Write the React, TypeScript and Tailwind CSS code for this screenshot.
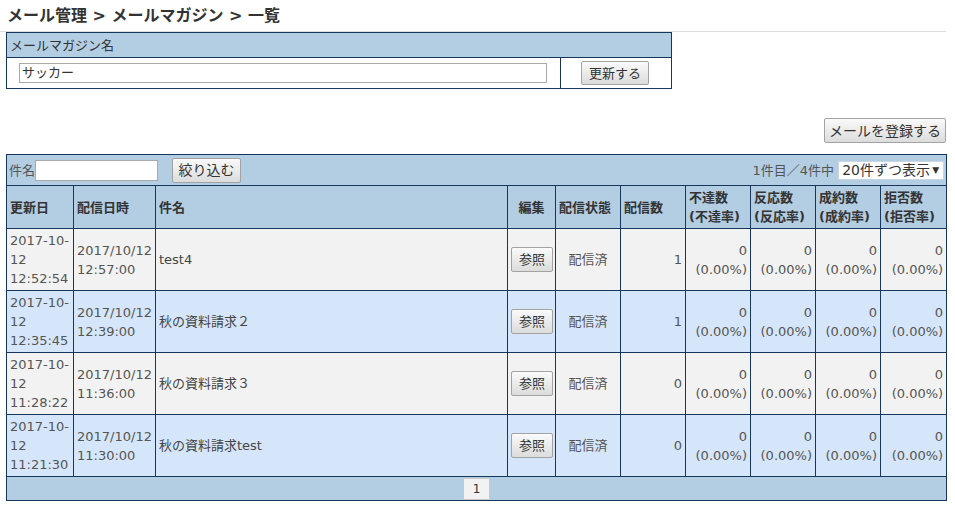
import React from 'react';

type Row = {
    updated: string;
    sent: string;
    subject: string;
    count: number;
    tone: 'gray' | 'blue';
};

const rows: Row[] = [
    { updated: '2017-10-12 12:52:54', sent: '2017/10/12 12:57:00', subject: 'test4', count: 1, tone: 'gray' },
    { updated: '2017-10-12 12:35:45', sent: '2017/10/12 12:39:00', subject: '秋の資料請求２', count: 1, tone: 'blue' },
    { updated: '2017-10-12 11:28:22', sent: '2017/10/12 11:36:00', subject: '秋の資料請求３', count: 0, tone: 'gray' },
    { updated: '2017-10-12 11:21:30', sent: '2017/10/12 11:30:00', subject: '秋の資料請求test', count: 0, tone: 'blue' },
];

const font = 'font-["DejaVu_Sans","Noto_Sans_CJK_JP",sans-serif]';
const btn =
    'bg-gradient-to-b from-[#fafafa] to-[#dcdcdc] border border-[#a3a3a3] rounded-[2px] text-[13px] text-[#333] leading-none';
const cell = 'border border-[#17365d] px-[3px] py-[2px]';

const Stat: React.FC<{ tone: string }> = ({ tone }) => (
    <td className={`${cell} ${tone} text-right align-middle`}>
        0
        <br />
        (0.00%)
    </td>
);

const App: React.FC = () => {
    return (
        <div className={`${font} w-[955px] h-[509px] bg-white text-[13px] leading-[19px] text-[#555]`}>
            {/* Title */}
            <div className="w-[946px] border-b border-[#dddddd] pl-[7px] pt-[5px] h-[32px]">
                <h1 className="text-[16px] leading-[22px] font-bold text-[#333]">
                    メール管理 &gt; メールマガジン &gt; 一覧
                </h1>
            </div>

            {/* Magazine name box */}
            <table className="ml-[6px] w-[665px] border-collapse table-fixed">
                <colgroup>
                    <col className="w-[554px]" />
                    <col className="w-[111px]" />
                </colgroup>
                <tbody>
                    <tr className="h-[25px] bg-[#b3cde3]">
                        <td colSpan={2} className="border border-[#17365d] px-[3px] text-[#333]">
                            メールマガジン名
                        </td>
                    </tr>
                    <tr className="h-[31px] bg-white">
                        <td className="border border-[#17365d] pl-[12px] pr-[13px]">
                            <div className="h-[20px] border border-[#a9a9a9] px-[2px] text-[13px] leading-[18px] text-[#333]">
                                サッカー
                            </div>
                        </td>
                        <td className="border border-[#17365d] pl-[20px]">
                            <button className={`${btn} w-[68px] h-[24px]`}>更新する</button>
                        </td>
                    </tr>
                </tbody>
            </table>

            {/* Register */}
            <div className="w-[946px] flex justify-end pt-[29px] pb-[11px]">
                <button className={`${btn} w-[122px] h-[25px] text-[14px]`}>メールを登録する</button>
            </div>

            {/* List */}
            <table className="ml-[6px] w-[940px] border-collapse table-fixed">
                <colgroup>
                    <col className="w-[67px]" />
                    <col className="w-[82px]" />
                    <col className="w-[352px]" />
                    <col className="w-[48px]" />
                    <col className="w-[65px]" />
                    <col className="w-[65px]" />
                    <col className="w-[65px]" />
                    <col className="w-[65px]" />
                    <col className="w-[65px]" />
                    <col className="w-[66px]" />
                </colgroup>
                <thead>
                    <tr className="h-[31px] bg-[#b3cde3]">
                        <td colSpan={10} className="border border-[#17365d] px-[2px]">
                            <div className="flex items-center justify-between">
                                <div className="flex items-center">
                                    <span>件名</span>
                                    <div className="w-[123px] h-[21px] bg-white border border-[#a9a9a9]" />
                                    <button className={`${btn} ml-[14px] w-[69px] h-[25px] text-[14px]`}>絞り込む</button>
                                </div>
                                <div className="flex items-center">
                                    <span className="mr-[4px]">1件目／4件中</span>
                                    <div className="w-[106px] h-[19px] bg-white border border-[#c8d6e2] flex items-center justify-between pl-[3px] pr-[4px] text-[14px] text-[#333]">
                                        <span>20件ずつ表示</span>
                                        <span className="text-[9px] leading-none">▼</span>
                                    </div>
                                </div>
                            </div>
                        </td>
                    </tr>
                    <tr className="h-[43px] bg-[#b3cde3] text-[#333] font-bold text-left align-middle">
                        <th className={`${cell} font-bold`}>更新日</th>
                        <th className={`${cell} font-bold`}>配信日時</th>
                        <th className={`${cell} font-bold`}>件名</th>
                        <th className={`${cell} font-bold text-center`}>編集</th>
                        <th className={`${cell} font-bold`}>配信状態</th>
                        <th className={`${cell} font-bold`}>配信数</th>
                        <th className={`${cell} font-bold`}>
                            不達数
                            <br />
                            (不達率)
                        </th>
                        <th className={`${cell} font-bold`}>
                            反応数
                            <br />
                            (反応率)
                        </th>
                        <th className={`${cell} font-bold`}>
                            成約数
                            <br />
                            (成約率)
                        </th>
                        <th className={`${cell} font-bold`}>
                            拒否数
                            <br />
                            (拒否率)
                        </th>
                    </tr>
                </thead>
                <tbody>
                    {rows.map((r) => {
                        const tone = r.tone === 'gray' ? 'bg-[#f2f2f2]' : 'bg-[#d6e6fa]';
                        return (
                            <tr key={r.updated} className="h-[62px]">
                                <td className={`${cell} ${tone} align-middle`}>{r.updated}</td>
                                <td className={`${cell} ${tone} align-middle`}>{r.sent}</td>
                                <td className={`${cell} ${tone} align-middle text-[#444]`}>{r.subject}</td>
                                <td className={`${cell} ${tone} text-center align-middle`}>
                                    <button className={`${btn} w-[42px] h-[25px]`}>参照</button>
                                </td>
                                <td className={`${cell} ${tone} text-center align-middle`}>配信済</td>
                                <td className={`${cell} ${tone} text-right align-middle`}>{r.count}</td>
                                <Stat tone={tone} />
                                <Stat tone={tone} />
                                <Stat tone={tone} />
                                <Stat tone={tone} />
                            </tr>
                        );
                    })}
                </tbody>
                <tfoot>
                    <tr className="h-[24px] bg-[#b3cde3]">
                        <td colSpan={10} className="border border-[#17365d] p-0">
                            <div className="flex justify-center">
                                <span className="w-[27px] h-[22px] bg-[#f2f2f2] border border-[#c9c9c9] text-center leading-[20px] text-[12px] text-[#333]">
                                    1
                                </span>
                            </div>
                        </td>
                    </tr>
                </tfoot>
            </table>
        </div>
    );
};

export default App;
